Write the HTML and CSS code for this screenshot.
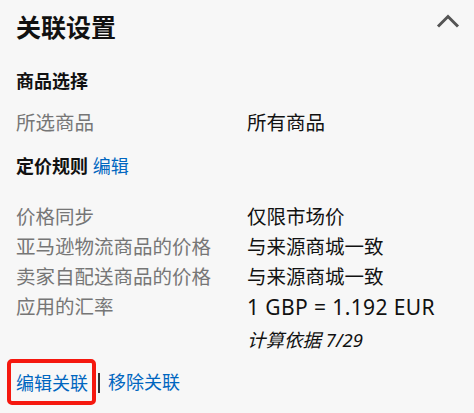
FILE: index.html
```html
<!DOCTYPE html>
<html lang="zh-CN">
<head>
  <meta charset="UTF-8">
  <title>关联设置</title>
  <link rel="stylesheet" href="styles.css">
</head>
<body>
  <div class="panel">
    <div class="header">
      <h1>关联设置</h1>
      <svg class="chevron" width="24" height="16" viewBox="0 0 24 16">
        <path d="M2 13.5 L12 3.5 L22 13.5" fill="none" stroke="#555" stroke-width="3"/>
      </svg>
    </div>

    <div class="section-title">商品选择</div>
    <div class="rows first">
      <div class="label">所选商品</div>
      <div class="value">所有商品</div>
    </div>

    <div class="section-title rule">定价规则 <a class="link normal" href="#">编辑</a></div>
    <div class="rows pricing">
      <div class="label">价格同步</div>
      <div class="value">仅限市场价</div>
      <div class="label">亚马逊物流商品的价格</div>
      <div class="value">与来源商城一致</div>
      <div class="label">卖家自配送商品的价格</div>
      <div class="value">与来源商城一致</div>
      <div class="label">应用的汇率</div>
      <div class="value rate">1 GBP = 1.192 EUR</div>
      <div class="label"></div>
      <div class="value note">计算依据 7/29</div>
    </div>

    <div class="actions">
      <span class="highlight"><a class="link" href="#">编辑关联</a></span>
      <span class="sep"></span>
      <a class="link" href="#">移除关联</a>
    </div>
  </div>
</body>
</html>
```

FILE: styles.css
```css
body{
  margin: 0;
  background: #f7f7f7;
  font-family: "Noto Sans", "Noto Sans CJK SC", sans-serif;
  color: #111;
}

.panel{
  padding: 0 14px 0 16px;
}

.header{
  height: 54px;
  display: flex;
  align-items: center;
  justify-content: space-between;
}
.header h1{
  margin: 0;
  font-size: 25px;
  font-weight: 700;
  line-height: 30px;
}
.chevron{
  margin-top: -12px;
}

.section-title{
  margin-top: 12px;
  font-size: 18px;
  font-weight: 700;
  line-height: 30px;
}
.section-title.rule{
  margin-top: 13px;
}

.rows{
  display: grid;
  grid-template-columns: 231px 1fr;
  font-size: 19.5px;
  line-height: 30px;
}
.rows.first{
  margin-top: 12px;
}
.rows.pricing{
  margin-top: 21px;
}
.label{
  color: #767676;
}
.value{
  color: #111;
}
.rate{
  font-size: 21px;
  letter-spacing: 0.4px;
}
.note{
  font-style: italic;
  font-size: 18.5px;
  line-height: 30px;
  padding-top: 3px;
}

.link{
  color: #0066c0;
  text-decoration: none;
}
.link.normal{
  font-weight: 400;
}

.actions{
  margin-top: 4px;
  display: flex;
  align-items: center;
  font-size: 18px;
  line-height: 30px;
}
.highlight{
  margin-left: -9px;
  padding: 5px 4px 3px 5px;
  border: 4px solid #f5180f;
  border-radius: 5px;
}
.sep{
  width: 2px;
  height: 20px;
  background: #333;
  margin: 2px 8px 0 2px;
}
```
